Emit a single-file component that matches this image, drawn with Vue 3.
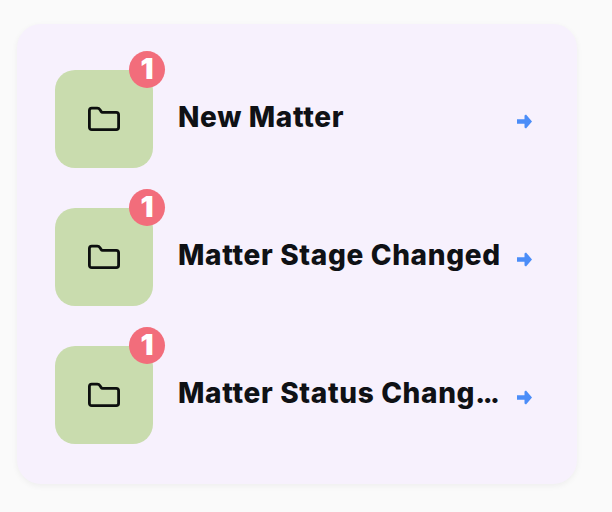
<script setup>
const items = [
  { text: 'New Matter', tail: '' },
  { text: 'Matter Stage Changed', tail: '' },
  { text: 'Matter Status Chang', tail: '...' },
]
</script>

<template>
  <div class="page">
    <div class="card">
      <div v-for="item in items" :key="item.text" class="row">
        <div class="tile">
          <svg width="34" height="26" viewBox="0 0 34 26" fill="none" stroke="#0c0f0e" stroke-width="2.8" stroke-linejoin="round">
            <path d="M2.4 4.6C2.4 3 3.2 2.2 4.8 2.2H10.2C11.6 2.2 12.4 2.8 13.2 4L14 5.4C14.4 6 14.8 6.4 15.6 6.4H29.2C30.8 6.4 31.6 7.2 31.6 8.8V21.2C31.6 22.8 30.8 23.6 29.2 23.6H4.8C3.2 23.6 2.4 22.8 2.4 21.2Z" />
          </svg>
          <span class="badge">1</span>
        </div>
        <span class="label">{{ item.text }}<span class="dots">{{ item.tail }}</span></span>
        <svg class="arrow" width="15" height="15" viewBox="0 0 15 15">
          <path d="M0 5.2H7.5V1.4L9 0.4L15 7.5L9 14.6L7.5 13.6V9.8H0Z" fill="#4b8df8" />
        </svg>
      </div>
    </div>
  </div>
</template>

<style scoped>
.page {
  box-sizing: border-box;
  width: 612px;
  height: 512px;
  padding: 24px 35px 28px 17px;
  background: #fafafa;
  font-family: Inter, "Liberation Sans", sans-serif;
}
.card {
  box-sizing: border-box;
  width: 560px;
  height: 460px;
  padding: 46px 45px 40px 38px;
  display: flex;
  flex-direction: column;
  gap: 40px;
  background: #f7f1fd;
  border-radius: 24px;
  box-shadow: 0 2px 6px rgba(0, 0, 0, 0.05);
}
.row {
  display: flex;
  align-items: center;
  height: 98px;
}
.tile {
  position: relative;
  flex: none;
  width: 98px;
  height: 98px;
  display: flex;
  align-items: center;
  justify-content: center;
  background: #c9dcae;
  border-radius: 20px;
}
.badge {
  position: absolute;
  top: -19px;
  right: -12px;
  width: 36px;
  height: 37px;
  padding-bottom: 3px;
  box-sizing: border-box;
  display: flex;
  align-items: center;
  justify-content: center;
  border-radius: 50%;
  background: #f26d7b;
  color: #fff;
  font-size: 29px;
  font-weight: 900;
}
.label {
  flex: none;
  width: 322px;
  margin-left: 25px;
  margin-bottom: 4px;
  white-space: nowrap;
  color: #0f1115;
  font-size: 28px;
  font-weight: 800;
  letter-spacing: 0.65px;
  line-height: 40px;
}
.dots {
  letter-spacing: -2.4px;
}
.arrow {
  flex: none;
  margin-left: 17px;
  margin-top: 4px;
}
</style>

<style>
body {
  background: #fafafa;
}
</style>
